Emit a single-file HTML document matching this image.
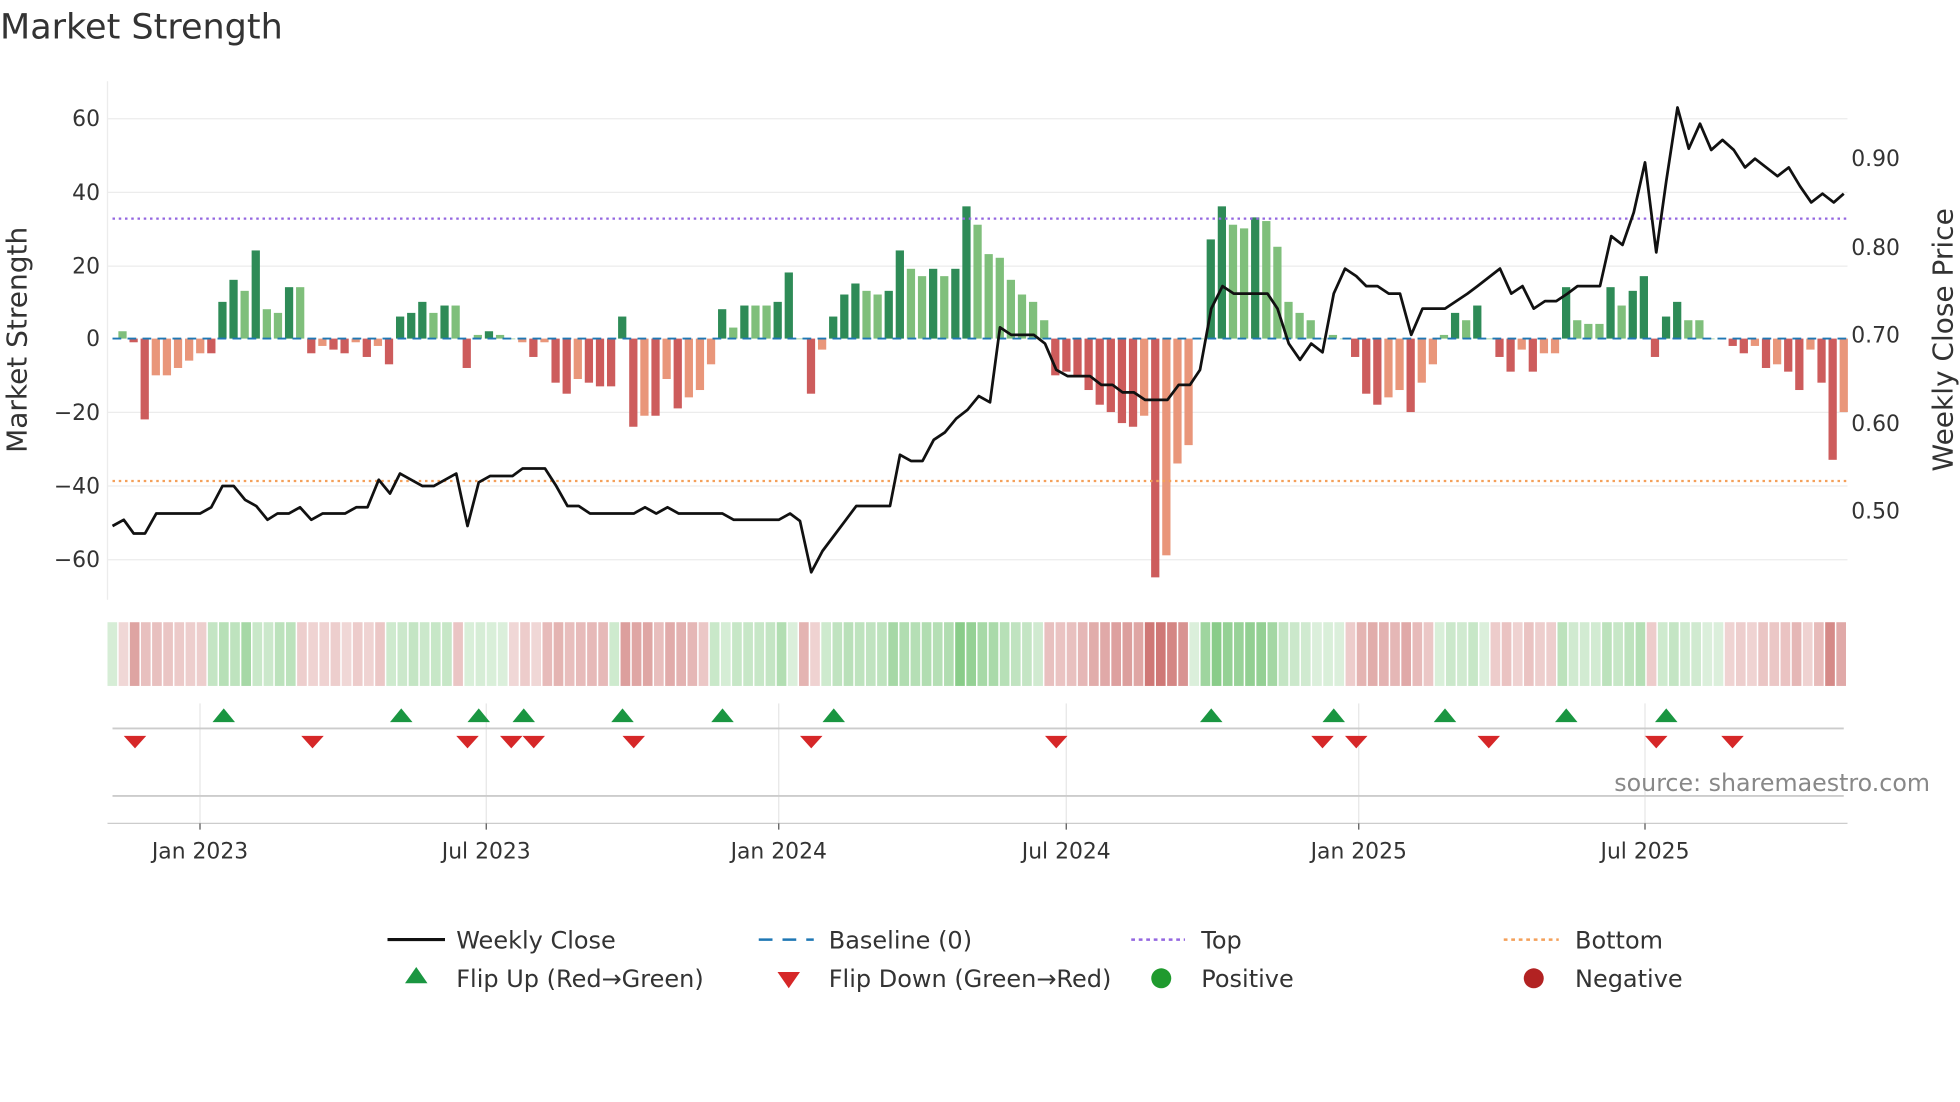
<!DOCTYPE html>
<html><head><meta charset="utf-8"><style>
html,body{margin:0;padding:0;background:#fff;}
svg{display:block;font-family:"DejaVu Sans","Liberation Sans",sans-serif;}
</style></head><body>
<svg id="s" width="1960" height="1102" viewBox="0 0 1568 882" preserveAspectRatio="none" xmlns="http://www.w3.org/2000/svg">
<rect width="1568" height="882" fill="#fff"/>
<text x="0" y="31" font-size="28" fill="#333">Market Strength</text>
<g id="grid" stroke="#ececec" stroke-width="1">
<line x1="86" x2="1478" y1="95" y2="95"/><line x1="86" x2="1478" y1="154" y2="154"/><line x1="86" x2="1478" y1="213" y2="213"/>
<line x1="86" x2="1478" y1="330" y2="330"/><line x1="86" x2="1478" y1="389" y2="389"/><line x1="86" x2="1478" y1="448" y2="448"/>
<line x1="86" x2="86" y1="65" y2="480"/>
</g>
<g font-size="17.5" fill="#333" text-anchor="end">
<text x="80" y="101">60</text><text x="80" y="160">40</text><text x="80" y="219">20</text><text x="80" y="277">0</text>
<text x="80" y="336">−20</text><text x="80" y="395">−40</text><text x="80" y="454">−60</text>
</g>
<g font-size="17.5" fill="#333">
<text x="1481" y="133">0.90</text><text x="1481" y="204">0.80</text><text x="1481" y="274">0.70</text><text x="1481" y="345">0.60</text><text x="1481" y="415">0.50</text>
</g>
<text transform="translate(21,272) rotate(-90)" font-size="22.4" fill="#333" text-anchor="middle">Market Strength</text>
<text transform="translate(1562,272) rotate(-90)" font-size="22.4" fill="#333" text-anchor="middle">Weekly Close Price</text>
<g id="bars"></g>
<line x1="90" x2="1478" y1="271" y2="271" stroke="#1f77b4" stroke-width="1.5" stroke-dasharray="7,5"/>
<line x1="90" x2="1478" y1="175" y2="175" stroke="#9467e0" stroke-width="1.8" stroke-dasharray="2,3"/>
<line x1="90" x2="1478" y1="385" y2="385" stroke="#f4a05a" stroke-width="1.8" stroke-dasharray="2,3"/>
<polyline id="price" fill="none" stroke="#111" stroke-width="2.2" stroke-linejoin="round"/>
<g id="strip"></g>
<g stroke="#e6e6e6" stroke-width="1">
<line x1="160" x2="160" y1="563" y2="659"/><line x1="389" x2="389" y1="563" y2="659"/><line x1="623" x2="623" y1="563" y2="659"/>
<line x1="853" x2="853" y1="563" y2="659"/><line x1="1087" x2="1087" y1="563" y2="659"/><line x1="1316" x2="1316" y1="563" y2="659"/>
</g>
<line x1="90" x2="1475" y1="583" y2="583" stroke="#ccc" stroke-width="1.5"/>
<line x1="90" x2="1475" y1="637" y2="637" stroke="#ccc" stroke-width="1.5"/>
<line x1="86" x2="1478" y1="659" y2="659" stroke="#ccc" stroke-width="1"/>
<g id="marks"></g>
<text x="1544" y="633" font-size="19" fill="#888" text-anchor="end">source: sharemaestro.com</text>
<g stroke="#555" stroke-width="1">
<line x1="160" x2="160" y1="659" y2="664"/><line x1="389" x2="389" y1="659" y2="664"/><line x1="623" x2="623" y1="659" y2="664"/>
<line x1="853" x2="853" y1="659" y2="664"/><line x1="1087" x2="1087" y1="659" y2="664"/><line x1="1316" x2="1316" y1="659" y2="664"/>
</g>
<g font-size="17.5" fill="#333" text-anchor="middle">
<text x="160" y="687">Jan 2023</text><text x="389" y="687">Jul 2023</text><text x="623" y="687">Jan 2024</text>
<text x="853" y="687">Jul 2024</text><text x="1087" y="687">Jan 2025</text><text x="1316" y="687">Jul 2025</text>
</g>
<g font-size="19.2" fill="#333">
<line x1="310" x2="356" y1="752" y2="752" stroke="#111" stroke-width="2.5"/><text x="365" y="759">Weekly Close</text>
<line x1="607" x2="651" y1="752" y2="752" stroke="#1f77b4" stroke-width="2" stroke-dasharray="11,8"/><text x="663" y="759">Baseline (0)</text>
<line x1="905" x2="948" y1="752" y2="752" stroke="#9467e0" stroke-width="2" stroke-dasharray="3,3"/><text x="961" y="759">Top</text>
<line x1="1203" x2="1247" y1="752" y2="752" stroke="#f4a05a" stroke-width="2" stroke-dasharray="3,3"/><text x="1260" y="759">Bottom</text>
<polygon points="333,774 342,787 324,787" fill="#1a9641"/><text x="365" y="790">Flip Up (Red→Green)</text>
<polygon points="622,778 640,778 631,791" fill="#d62728"/><text x="663" y="790">Flip Down (Green→Red)</text>
<circle cx="929" cy="783" r="8" fill="#1f9a2e"/><text x="961" y="790">Positive</text>
<circle cx="1227" cy="783" r="8" fill="#b22222"/><text x="1260" y="790">Negative</text>
</g>
</svg>
<script>
var ns="http://www.w3.org/2000/svg";
var B=[[2,'l'],[-1,'d'],[-22,'d'],[-10,'l'],[-10,'l'],[-8,'l'],[-6,'l'],[-4,'l'],[-4,'d'],[10,'d'],[16,'d'],[13,'l'],[24,'d'],[8,'l'],[7,'l'],[14,'d'],[14,'l'],[-4,'d'],[-2,'l'],[-3,'d'],[-4,'d'],[-1,'l'],[-5,'d'],[-2,'l'],[-7,'d'],[6,'d'],[7,'d'],[10,'d'],[7,'l'],[9,'d'],[9,'l'],[-8,'d'],[1,'l'],[2,'d'],[1,'l'],[0,'l'],[-1,'l'],[-5,'d'],[-1,'l'],[-12,'d'],[-15,'d'],[-11,'l'],[-12,'d'],[-13,'d'],[-13,'d'],[6,'d'],[-24,'d'],[-21,'l'],[-21,'d'],[-11,'l'],[-19,'d'],[-16,'l'],[-14,'l'],[-7,'l'],[8,'d'],[3,'l'],[9,'d'],[9,'l'],[9,'l'],[10,'d'],[18,'d'],[0,'l'],[-15,'d'],[-3,'l'],[6,'d'],[12,'d'],[15,'d'],[13,'l'],[12,'l'],[13,'d'],[24,'d'],[19,'l'],[17,'l'],[19,'d'],[17,'l'],[19,'d'],[36,'d'],[31,'l'],[23,'l'],[22,'l'],[16,'l'],[12,'l'],[10,'l'],[5,'l'],[-10,'d'],[-9,'d'],[-10,'d'],[-14,'d'],[-18,'d'],[-20,'d'],[-23,'d'],[-24,'d'],[-21,'l'],[-65,'d'],[-59,'l'],[-34,'l'],[-29,'l'],[0,'l'],[27,'d'],[36,'d'],[31,'l'],[30,'l'],[33,'d'],[32,'l'],[25,'l'],[10,'l'],[7,'l'],[5,'l'],[0,'l'],[1,'l'],[0,'l'],[-5,'d'],[-15,'d'],[-18,'d'],[-16,'l'],[-14,'l'],[-20,'d'],[-12,'l'],[-7,'l'],[1,'l'],[7,'d'],[5,'l'],[9,'d'],[0,'l'],[-5,'d'],[-9,'d'],[-3,'l'],[-9,'d'],[-4,'l'],[-4,'l'],[14,'d'],[5,'l'],[4,'l'],[4,'l'],[14,'d'],[9,'l'],[13,'d'],[17,'d'],[-5,'d'],[6,'d'],[10,'d'],[5,'l'],[5,'l'],[0,'l'],[0,'l'],[-2,'d'],[-4,'d'],[-2,'l'],[-8,'d'],[-7,'l'],[-9,'d'],[-14,'d'],[-3,'l'],[-12,'d'],[-33,'d'],[-20,'l']];
var step=(1475-98)/(B.length-1);
var gb=document.getElementById('bars'),gs=document.getElementById('strip');
var col={pd:'#2e8b57',pl:'#7fbf7b',nd:'#cd5c5c',nl:'#e9967a'};
var sstep=(1478-86)/B.length;
for(var i=0;i<B.length;i++){var v=B[i][0],x=98+i*step;
 var r=document.createElementNS(ns,'rect');var h=Math.abs(v)*2.94;
 r.setAttribute('x',x-3.3);r.setAttribute('width',6.6);
 r.setAttribute('y',v>=0?271-h:271);r.setAttribute('height',Math.max(h,0.5));
 r.setAttribute('fill',col[(v>=0?'p':'n')+B[i][1]]);gb.appendChild(r);
 var c=document.createElementNS(ns,'rect');c.setAttribute('x',86+i*sstep);c.setAttribute('width',sstep-1.2);
 c.setAttribute('y',498);c.setAttribute('height',51);
 var a=Math.min(Math.abs(v),40)/40;
 c.setAttribute('fill',v>=0?'#5cb85c':'#c0504d');c.setAttribute('opacity',(0.22+0.55*a).toFixed(2));gs.appendChild(c);}
var P=[90,421,99,416,107,427,116,427,125,411,133,411,142,411,151,411,160,411,169,406,178,389,187,389,196,400,205,405,214,416,222,411,231,411,240,406,249,416,258,411,267,411,276,411,285,406,294,406,303,384,312,395,320,379,329,384,338,389,347,389,356,384,365,379,374,421,383,386,392,381,401,381,410,381,418,375,427,375,436,375,445,389,454,405,463,405,472,411,481,411,489,411,498,411,507,411,516,406,525,411,534,406,543,411,552,411,560,411,569,411,578,411,587,416,596,416,605,416,614,416,623,416,632,411,640,417,649,458,658,441,667,429,676,417,685,405,694,405,703,405,712,405,720,364,729,369,738,369,747,352,756,346,765,335,774,328,783,317,792,322,800,262,809,268,818,268,827,268,836,275,845,296,854,301,863,301,872,301,881,308,890,308,898,314,907,314,916,320,925,320,934,320,943,308,952,308,960,296,969,247,978,229,987,235,996,235,1005,235,1014,235,1022,247,1031,275,1040,288,1049,275,1058,282,1067,235,1076,215,1085,221,1093,229,1102,229,1111,235,1120,235,1129,268,1138,247,1147,247,1156,247,1165,241,1174,235,1182,229,1191,222,1200,215,1209,235,1218,229,1227,247,1236,241,1245,241,1254,235,1262,229,1271,229,1280,229,1289,189,1298,196,1307,170,1316,130,1325,202,1333,145,1342,86,1351,119,1360,99,1369,120,1378,112,1387,120,1396,134,1404,127,1413,134,1422,141,1431,134,1440,149,1449,162,1458,155,1467,162,1475,155];
var s="";for(var j=0;j<P.length;j+=2)s+=P[j]+","+P[j+1]+" ";
document.getElementById('price').setAttribute('points',s);
var gm=document.getElementById('marks');
[179,321,383,419,498,578,667,969,1067,1156,1253,1333].forEach(function(x){var p=document.createElementNS(ns,'polygon');p.setAttribute('points',x+',567 '+(x+9)+',578 '+(x-9)+',578');p.setAttribute('fill','#1a9641');gm.appendChild(p);});
[108,250,374,409,427,507,649,845,1058,1085,1191,1325,1386].forEach(function(x){var p=document.createElementNS(ns,'polygon');p.setAttribute('points',(x-9)+',589 '+(x+9)+',589 '+x+',599');p.setAttribute('fill','#d62728');gm.appendChild(p);});
</script>
</body></html>
